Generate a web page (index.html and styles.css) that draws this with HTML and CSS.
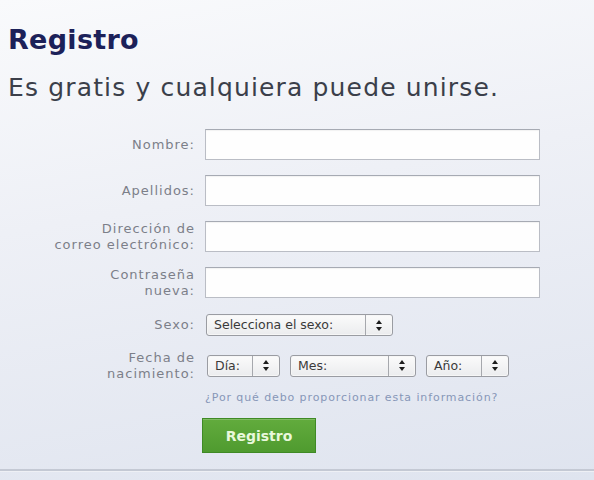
FILE: index.html
```html
<!DOCTYPE html>
<html lang="es">
<head>
<meta charset="utf-8">
<link rel="stylesheet" href="styles.css">
</head>
<body>
<div class="page">
  <h1 class="title">Registro</h1>
  <p class="subtitle">Es gratis y cualquiera puede unirse.</p>
  <form class="form">
    <div class="row">
      <label class="label">Nombre:</label>
      <div class="input"></div>
    </div>
    <div class="row">
      <label class="label">Apellidos:</label>
      <div class="input"></div>
    </div>
    <div class="row">
      <label class="label">Direcci&oacute;n de<br>correo electr&oacute;nico:</label>
      <div class="input"></div>
    </div>
    <div class="row">
      <label class="label">Contrase&ntilde;a<br>nueva:</label>
      <div class="input"></div>
    </div>
    <div class="row row-sel">
      <label class="label">Sexo:</label>
      <div class="select sel-sexo"><span class="sel-text">Selecciona el sexo:</span><span class="spin"><i class="up"></i><i class="down"></i></span></div>
    </div>
    <div class="row row-date">
      <label class="label">Fecha de<br>nacimiento:</label>
      <div class="dates">
        <div class="select sel-dia"><span class="sel-text">D&iacute;a:</span><span class="spin"><i class="up"></i><i class="down"></i></span></div>
        <div class="select sel-mes"><span class="sel-text">Mes:</span><span class="spin"><i class="up"></i><i class="down"></i></span></div>
        <div class="select sel-ano"><span class="sel-text">A&ntilde;o:</span><span class="spin"><i class="up"></i><i class="down"></i></span></div>
      </div>
    </div>
    <div class="row row-link">
      <span class="label"></span>
      <a class="why" href="#">&iquest;Por qu&eacute; debo proporcionar esta informaci&oacute;n?</a>
    </div>
    <div class="row row-btn">
      <span class="label"></span>
      <button type="button" class="btn">Registro</button>
    </div>
  </form>
  <div class="rule"></div>
</div>
</body>
</html>
```
FILE: styles.css
```css
html, body {
  margin: 0;
  padding: 0;
}
body {
  width: 594px;
  height: 480px;
  overflow: hidden;
  background: linear-gradient(170deg, #f9fafc 0%, #eef0f6 40%, #dfe4ef 100%);
  font-family: "DejaVu Sans", sans-serif;
}
.page {
  padding: 22px 0 0 8px;
}
.title {
  margin: 0;
  font-family: "DejaVu Sans", sans-serif;
  font-weight: bold;
  font-size: 27px;
  line-height: 36px;
  color: #1c2159;
  letter-spacing: 0.3px;
}
.subtitle {
  margin: 14px 0 0;
  font-size: 25px;
  line-height: 32px;
  color: #3b3f4a;
  letter-spacing: 1.15px;
}
.form {
  margin-top: 25px;
  display: flex;
  flex-direction: column;
}
.row {
  display: flex;
  align-items: center;
  height: 31px;
  margin-bottom: 15px;
}
.label {
  flex: none;
  width: 197px;
  padding-right: 10px;
  box-sizing: border-box;
  text-align: right;
  font-size: 13px;
  line-height: 16px;
  color: #7c7f89;
  letter-spacing: 1px;
}
.input {
  width: 335px;
  height: 31px;
  box-sizing: border-box;
  background: #fefefe;
  border: 1px solid #babdc5;
  border-top-color: #a6aab3;
  box-shadow: inset 0 1px 1px rgba(0,0,0,0.05);
}
.row-sel {
  height: 22px;
  margin-top: 1px;
  margin-bottom: 18px;
}
.row-date {
  height: 23px;
  margin-bottom: 12px;
}
.dates {
  display: flex;
  gap: 10px;
}
.select {
  display: flex;
  align-items: stretch;
  height: 22px;
  box-sizing: border-box;
  border: 1px solid #9a9ca2;
  border-radius: 3px;
  background: linear-gradient(#fbfbfb, #ebecee);
  box-shadow: inset 0 0 0 1px #f6f6f6;
  font-size: 12.5px;
  color: #3a3a3a;
}
.sel-text {
  flex: 1;
  padding: 0 7px;
  line-height: 20px;
  white-space: nowrap;
}
.spin {
  width: 26px;
  border-left: 1px solid #a6a8ad;
  display: flex;
  flex-direction: column;
  align-items: center;
  justify-content: center;
  gap: 3px;
}
.up, .down {
  display: block;
  width: 0;
  height: 0;
  border-left: 3px solid transparent;
  border-right: 3px solid transparent;
}
.up { border-bottom: 4px solid #1d1d1d; }
.down { border-top: 4px solid #1d1d1d; }
.sel-sexo { width: 187px; margin-left: 1px; }
.sel-dia { width: 73px; margin-left: 2px; }
.sel-mes { width: 126px; }
.sel-ano { width: 83px; }
.row-link {
  height: 16px;
  margin-bottom: 13px;
}
.why {
  font-size: 11px;
  color: #8797b8;
  text-decoration: none;
  letter-spacing: 0.9px;
}
.row-btn {
  height: 35px;
  margin-bottom: 0;
}
.row-btn .label { width: 194px; }
.btn {
  width: 114px;
  height: 35px;
  border: 1px solid #3f8a25;
  background: linear-gradient(#62ab3d, #4f9b2f);
  color: #e9f8dc;
  font-family: "DejaVu Sans", sans-serif;
  font-weight: bold;
  font-size: 14px;
  padding: 0;
  box-shadow: inset 0 1px 0 rgba(255,255,255,0.2);
}
.rule {
  margin: 16px 0 0 -8px;
  height: 2px;
  background: #c4c9d4;
  border-bottom: 1px solid #eef0f5;
}
```
